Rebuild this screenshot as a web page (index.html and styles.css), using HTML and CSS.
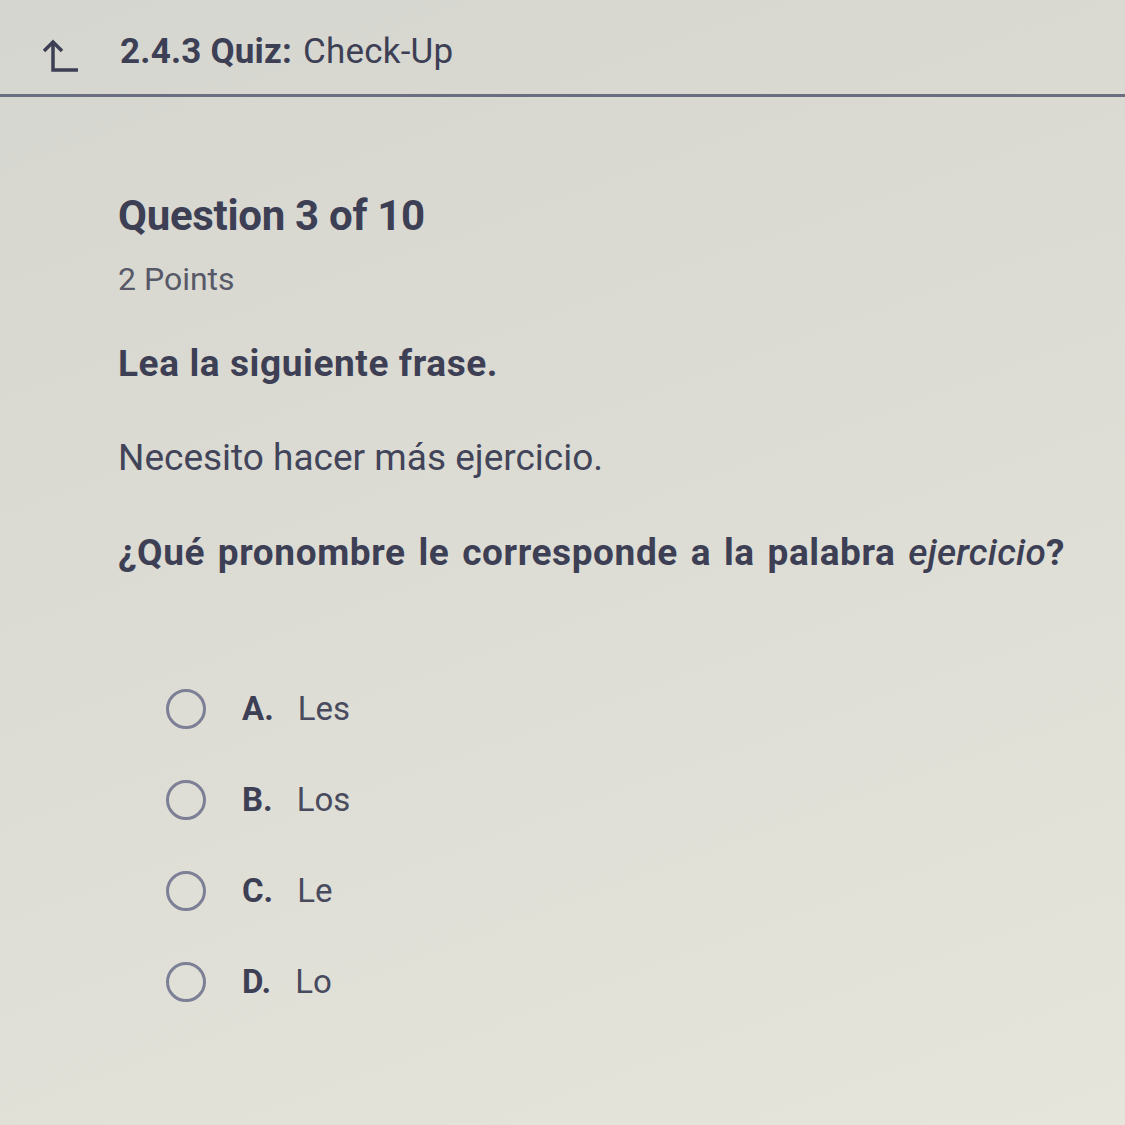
FILE: index.html
```html
<!DOCTYPE html>
<html lang="es">

<head>
  <meta charset="UTF-8">
  <meta name="viewport" content="width=device-width, initial-scale=1.0">
  <title>2.4.3 Quiz: Check-Up</title>
  <link rel="stylesheet" href="styles.css">
</head>

<body>

  <div class="top">
    <svg class="up" width="40" height="36" viewBox="0 0 40 36">
      <path d="M4 12 L13 3 L22 12 M13 3 L13 31 L38 31" fill="none" stroke="#3d3f55" stroke-width="3.5" stroke-linejoin="miter" />
    </svg>
    <h1><b>2.4.3 Quiz:</b> Check-Up</h1>
  </div>

  <div class="main">
    <h2>Question 3 of 10</h2>
    <p class="points">2 Points</p>

    <p class="bold lea">Lea la siguiente frase.</p>
    <p class="frase">Necesito hacer más ejercicio.</p>
    <p class="bold ask">¿Qué pronombre le corresponde a la palabra <i>ejercicio</i>?</p>

    <ul class="answers">
      <li><span class="radio"></span><b>A.</b> Les</li>
      <li><span class="radio"></span><b>B.</b> Los</li>
      <li><span class="radio"></span><b>C.</b> Le</li>
      <li><span class="radio"></span><b>D.</b> Lo</li>
    </ul>
  </div>

</body>

</html>
```

FILE: styles.css
```css
* {
  margin: 0;
  padding: 0;
}

html {
  height: 100%;
}

body {
  min-height: 100%;
  font-family: Roboto, "Liberation Sans", sans-serif;
  color: #3d3f55;
  background: linear-gradient(160deg, #d6d6d0 0%, #dcdcd4 45%, #e6e5dc 100%);
}

.top {
  display: flex;
  align-items: center;
  gap: 40px;
  padding: 22px 0 0 40px;
  height: 72px;
  border-bottom: 3px solid #6b6d80;
}

.up {
  margin-top: -2px;
}

h1 {
  font-size: 35px;
  font-weight: 400;
  letter-spacing: 0.2px;
  margin-top: -14px;
}

h1 b {
  font-weight: 700;
  margin-right: 2px;
}

.main {
  padding: 96px 0 0 118px;
}

h2 {
  font-size: 42px;
  font-weight: 700;
  letter-spacing: -0.3px;
  line-height: 46px;
}

.points {
  font-size: 32px;
  color: #575968;
  margin-top: 22px;
  line-height: 36px;
}

.bold {
  font-size: 37px;
  font-weight: 700;
  letter-spacing: 0.6px;
  line-height: 40px;
}

.lea {
  margin-top: 47px;
}

.ask {
  margin-top: 55px;
  word-spacing: 3px;
}

.bold i {
  font-weight: 500;
  letter-spacing: 0.2px;
}

.frase {
  font-size: 37px;
  line-height: 40px;
  margin-top: 54px;
  color: #424459;
}

.answers {
  list-style: none;
  margin: 116px 0 0 48px;
  display: flex;
  flex-direction: column;
  gap: 51px;
}

.answers li {
  display: flex;
  align-items: center;
  font-size: 33px;
  line-height: 40px;
  color: #484a5e;
}

.answers b {
  font-weight: 700;
  margin-right: 24px;
  color: #3d3f55;
}

.radio {
  width: 40px;
  height: 40px;
  border: 3px solid #7d7f96;
  border-radius: 50%;
  box-sizing: border-box;
  margin-right: 36px;
}
```
